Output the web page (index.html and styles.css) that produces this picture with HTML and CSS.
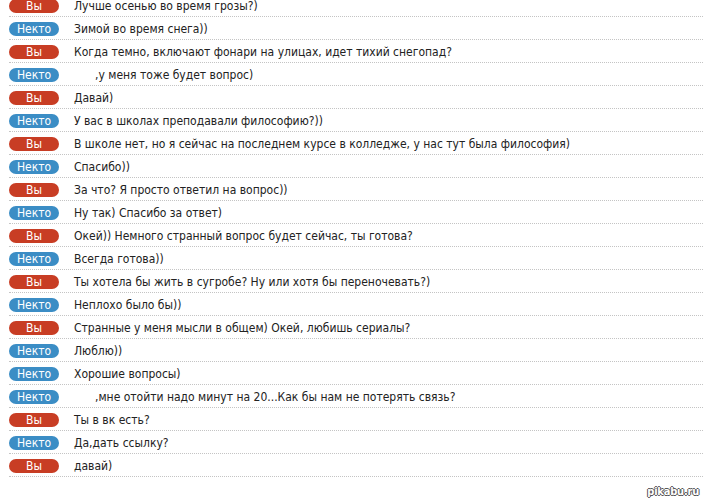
FILE: index.html
```html
<!DOCTYPE html>
<html lang="ru">
<head>
    <meta charset="UTF-8">
    <title>Чат</title>
    <link rel="stylesheet" href="styles.css">
</head>
<body>
    <div class="chat">
        <div class="row"><span class="who you">Вы</span><span class="msg">Лучше осенью во время грозы?)</span></div>
        <div class="row"><span class="who other">Некто</span><span class="msg">Зимой во время снега))</span></div>
        <div class="row"><span class="who you">Вы</span><span class="msg">Когда темно, включают фонари на улицах, идет тихий снегопад?</span></div>
        <div class="row"><span class="who other">Некто</span><span class="msg indent">,у меня тоже будет вопрос)</span></div>
        <div class="row"><span class="who you">Вы</span><span class="msg">Давай)</span></div>
        <div class="row"><span class="who other">Некто</span><span class="msg">У вас в школах преподавали философию?))</span></div>
        <div class="row"><span class="who you">Вы</span><span class="msg">В школе нет, но я сейчас на последнем курсе в колледже, у нас тут была философия)</span></div>
        <div class="row"><span class="who other">Некто</span><span class="msg">Спасибо))</span></div>
        <div class="row"><span class="who you">Вы</span><span class="msg">За что? Я просто ответил на вопрос))</span></div>
        <div class="row"><span class="who other">Некто</span><span class="msg">Ну так) Спасибо за ответ)</span></div>
        <div class="row"><span class="who you">Вы</span><span class="msg">Окей)) Немного странный вопрос будет сейчас, ты готова?</span></div>
        <div class="row"><span class="who other">Некто</span><span class="msg">Всегда готова))</span></div>
        <div class="row"><span class="who you">Вы</span><span class="msg">Ты хотела бы жить в сугробе? Ну или хотя бы переночевать?)</span></div>
        <div class="row"><span class="who other">Некто</span><span class="msg">Неплохо было бы))</span></div>
        <div class="row"><span class="who you">Вы</span><span class="msg">Странные у меня мысли в общем) Окей, любишь сериалы?</span></div>
        <div class="row"><span class="who other">Некто</span><span class="msg">Люблю))</span></div>
        <div class="row"><span class="who other">Некто</span><span class="msg">Хорошие вопросы)</span></div>
        <div class="row"><span class="who other">Некто</span><span class="msg indent">,мне отойти надо минут на 20...Как бы нам не потерять связь?</span></div>
        <div class="row"><span class="who you">Вы</span><span class="msg">Ты в вк есть?</span></div>
        <div class="row"><span class="who other">Некто</span><span class="msg">Да,дать ссылку?</span></div>
        <div class="row"><span class="who you">Вы</span><span class="msg">давай)</span></div>
    </div>

    <div class="footer">
        <span class="mark">pikabu.ru</span>
    </div>
</body>
</html>
```

FILE: styles.css
```css
* {
    margin: 0;
    padding: 0;
    box-sizing: border-box;
}

body {
    font-family: "DejaVu Sans Condensed", "DejaVu Sans", sans-serif;
    background-color: #fff;
    color: #222;
    width: 705px;
    height: 501px;
    overflow: hidden;
}

.chat {
    margin: -6px 2px 0 9px;
}

.row {
    display: flex;
    align-items: center;
    height: 23px;
    padding-top: 2px;
    border-bottom: 1px dotted #c4c4c4;
}

.who {
    width: 50px;
    height: 14px;
    border-radius: 7px;
    color: #fff;
    font-size: 12px;
    line-height: 14px;
    text-align: center;
    flex-shrink: 0;
}

.you {
    background-color: #c83d24;
}

.other {
    background-color: #3b8dc5;
}

.msg {
    margin-left: 15px;
    font-size: 12px;
    white-space: nowrap;
}

.indent {
    padding-left: 21px;
}

.footer {
    display: flex;
    justify-content: flex-end;
    padding: 8px 6px 0 0;
}

.mark {
    font-family: "DejaVu Sans Condensed", sans-serif;
    font-weight: bold;
    font-size: 11px;
    letter-spacing: -0.2px;
    color: #fff;
    text-shadow: -1px 0 #555, 1px 0 #555, 0 -1px #555, 0 1px #555;
}
```
